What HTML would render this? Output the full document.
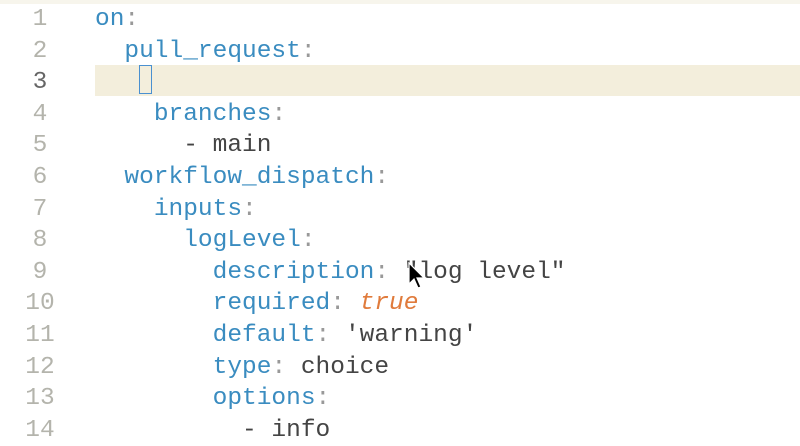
<!DOCTYPE html>
<html><head><style>
body{margin:0;width:800px;height:442px;background:#fff;overflow:hidden;position:relative;font-family:"Liberation Mono",monospace;font-size:24.5px}
.l{position:absolute;left:0;height:31.6px;line-height:31.6px;white-space:pre;width:800px}
.n{position:absolute;left:20px;width:40px;text-align:center;color:#b4b4ac}
.c{position:absolute;left:95px;color:#444}
.k{color:#3a8cc0}.p{color:#999}.t{color:#e07b3c;font-style:italic}
.hl{position:absolute;left:95px;top:65px;width:705px;height:31px;background:#f3eedc}
.cur{position:absolute;left:139px;top:65px;width:13px;height:29px;border:1.5px solid #4a90d0;box-sizing:border-box}
</style></head><body>
<div style="position:absolute;left:0;top:0;width:800px;height:4px;background:#f7f5ec"></div>
<div class="hl"></div><div class="cur"></div>
<div class="l" style="top:4px"><span class="n">1</span><span class="c"><span class="k">on</span><span class="p">:</span></span></div>
<div class="l" style="top:35.6px"><span class="n">2</span><span class="c">  <span class="k">pull_request</span><span class="p">:</span></span></div>
<div class="l" style="top:67.2px"><span class="n" style="color:#666">3</span><span class="c"></span></div>
<div class="l" style="top:98.8px"><span class="n">4</span><span class="c">    <span class="k">branches</span><span class="p">:</span></span></div>
<div class="l" style="top:130.4px"><span class="n">5</span><span class="c">      - main</span></div>
<div class="l" style="top:162px"><span class="n">6</span><span class="c">  <span class="k">workflow_dispatch</span><span class="p">:</span></span></div>
<div class="l" style="top:193.6px"><span class="n">7</span><span class="c">    <span class="k">inputs</span><span class="p">:</span></span></div>
<div class="l" style="top:225.2px"><span class="n">8</span><span class="c">      <span class="k">logLevel</span><span class="p">:</span></span></div>
<div class="l" style="top:256.8px"><span class="n">9</span><span class="c">        <span class="k">description</span><span class="p">:</span> "log level"</span></div>
<div class="l" style="top:288.4px"><span class="n">10</span><span class="c">        <span class="k">required</span><span class="p">:</span> <span class="t">true</span></span></div>
<div class="l" style="top:320px"><span class="n">11</span><span class="c">        <span class="k">default</span><span class="p">:</span> 'warning'</span></div>
<div class="l" style="top:351.6px"><span class="n">12</span><span class="c">        <span class="k">type</span><span class="p">:</span> choice</span></div>
<div class="l" style="top:383.2px"><span class="n">13</span><span class="c">        <span class="k">options</span><span class="p">:</span></span></div>
<div class="l" style="top:414.8px"><span class="n">14</span><span class="c">          - info</span></div>
<svg style="position:absolute;left:408px;top:262px" width="18" height="28" viewBox="0 0 18 28"><path d="M1 1 L1 22 L6 17 L10 26 L13 25 L9 16 L16 16 Z" fill="#000" stroke="#fff" stroke-width="1.2"/></svg>
</body></html>
